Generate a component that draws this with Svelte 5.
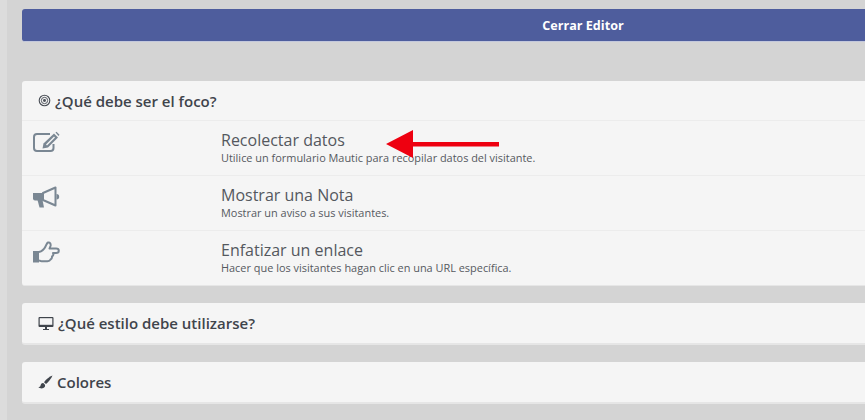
<script>
  const options = [
    { icon: 'edit', title: 'Recolectar datos', text: 'Utilice un formulario Mautic para recopilar datos del visitante.' },
    { icon: 'horn', title: 'Mostrar una Nota', text: 'Mostrar un aviso a sus visitantes.' },
    { icon: 'hand', title: 'Enfatizar un enlace', text: 'Hacer que los visitantes hagan clic en una URL específica.' }
  ];
</script>

<main class="page">
  <button class="close" type="button">Cerrar Editor</button>

  <section class="panel focus">
    <h3>
      <svg class="head-icon" viewBox="0 0 14 14" width="13" height="13">
        <circle cx="7" cy="7" r="5.7" fill="none" stroke="#4a4f57" stroke-width="1.2" />
        <circle cx="7" cy="7" r="3.4" fill="none" stroke="#4a4f57" stroke-width="1" />
        <circle cx="7" cy="7" r="1.6" fill="#4a4f57" />
      </svg>
      ¿Qué debe ser el foco?
    </h3>
    {#each options as option}
      <div class="row">
        <div class="icon">
          {#if option.icon === 'edit'}
            <svg viewBox="0 0 28 24" width="28" height="24">
              <path d="M20.500 14v4a3 3 0 0 1-3 3H4a3 3 0 0 1-3-3V7a3 3 0 0 1 3-3h13" fill="none" stroke="#7a8793" stroke-width="2" />
              <path d="M9.500 18.500l1-5L21 3.500l4 4L15 17.500z" fill="#7a8793" />
              <path d="M13 14.500l8-8 1 1-8 8z" fill="#f5f5f5" />
              <path d="M22.500 2.500l1-.7 3 3-1 1.200z" fill="#7a8793" />
            </svg>
          {:else if option.icon === 'horn'}
            <svg viewBox="0 0 28 24" width="28" height="24">
              <path d="M0 8h10v7.500H2a2 2 0 0 1-2-2z" fill="#7a8793" />
              <path d="M4.500 15h5l1.500 7.500H6.500z" fill="#7a8793" />
              <path d="M10 8l12.500-5.500v18L10 15z" fill="none" stroke="#7a8793" stroke-width="2" stroke-linejoin="round" />
              <path d="M23.500 9a2.700 2.700 0 0 1 0 5.400z" fill="#7a8793" />
            </svg>
          {:else}
            <svg viewBox="0 0 28 24" width="28" height="24">
              <path d="M0 11h6v11.500H0z" fill="#7a8793" />
              <path d="M6 12c2.500-.5 5-2.500 6.500-5.500.8-1.500 1.300-3.500 2.500-4 2-.5 3 1.500 2.500 3.500l-1 2.500h6.500c2 0 2.800 1 2.800 2.200 0 1.500-1 2.300-2.800 2.300h-3c.8 1.800 0 3-1 3.500.2 1.500-.5 2.500-1.500 3-.5 1.300-1.500 1.800-3 1.800H8.500c-1.200 0-2-.5-2.500-1.300" fill="none" stroke="#7a8793" stroke-width="2" stroke-linejoin="round" />
            </svg>
          {/if}
        </div>
        <div class="copy">
          <h4>{option.title}</h4>
          <p>{option.text}</p>
        </div>
      </div>
    {/each}
    <svg class="arrow" viewBox="0 0 114 30" width="114" height="30">
      <path d="M0 15L27 1v12h86v4.500H27V29z" fill="#ee0010" />
    </svg>
  </section>

  <section class="panel">
    <h3>
      <svg class="head-icon" viewBox="0 0 16 14" width="16" height="14">
        <path d="M1.500 1h13a1 1 0 0 1 1 1v8a1 1 0 0 1-1 1h-13a1 1 0 0 1-1-1V2a1 1 0 0 1 1-1z" fill="#3f444b" />
        <path d="M1.700 2.200h12.600v6.600H1.700z" fill="#f5f5f5" />
        <path d="M5 13h6v1H5zM7 11h2v2H7z" fill="#3f444b" />
      </svg>
      ¿Qué estilo debe utilizarse?
    </h3>
  </section>

  <section class="panel">
    <h3>
      <svg class="head-icon" viewBox="0 0 15 14" width="15" height="14">
        <path d="M14.500 .5c-3 1-6.500 3.800-8.500 6.700l2 1.700C10.500 7 13.500 3.500 14.500 .5z" fill="#3f444b" />
        <path d="M5.200 8c-2.200 0-2.400 1.800-2.800 3-.2.800-1 1-2 1.200 1.500 1.500 5 1.700 6.300-.2.800-1.300.5-2.700-1.500-4z" fill="#3f444b" />
      </svg>
      Colores
    </h3>
  </section>
</main>

<style>
  :global(body) {
    background: linear-gradient(90deg, #dcdcdc 7px, #d4d4d4 7px);
    overflow: hidden;
  }

  .page {
    width: 1122px;
    height: 420px;
    margin-left: 22px;
    padding-top: 9px;
    box-sizing: border-box;
    font-family: "Open Sans", "Liberation Sans", sans-serif;
    color: #4e5359;
  }

  .close {
    display: block;
    width: 100%;
    height: 32px;
    box-sizing: content-box;
    padding: 0;
    border: none;
    border-bottom: 1px solid #c3c8dc;
    border-radius: 3px;
    background: #4e5d9d;
    color: #fff;
    font-family: inherit;
    font-size: 12.600px;
    font-weight: 700;
  }

  .panel {
    position: relative;
    margin-bottom: 17px;
    border-bottom: 2px solid #e6e6e6;
    border-radius: 3px;
    background: #f5f5f5;
  }

  .focus {
    margin-top: 39px;
    border-bottom-width: 1px;
  }

  h3 {
    display: flex;
    align-items: center;
    gap: 4px;
    height: 40px;
    margin: 0;
    padding-left: 16px;
    font-size: 15px;
    font-weight: 600;
    color: #3f444b;
  }

  .focus h3 {
    height: 39px;
  }

  .head-icon {
    flex: none;
  }

  .row {
    display: grid;
    grid-template-columns: 199px 1fr;
    height: 54px;
    border-top: 1px solid #ececec;
  }

  .icon {
    padding: 9px 0 0 11px;
    line-height: 0;
  }

  .copy {
    padding-top: 10px;
  }

  h4 {
    margin: 0;
    font-size: 16px;
    font-weight: 400;
    line-height: 18px;
    color: #54585e;
  }

  p {
    margin: 2px 0 0;
    font-size: 10.930px;
    line-height: 14px;
    color: #55595f;
  }

  .arrow {
    position: absolute;
    left: 364px;
    top: 48px;
  }
</style>
